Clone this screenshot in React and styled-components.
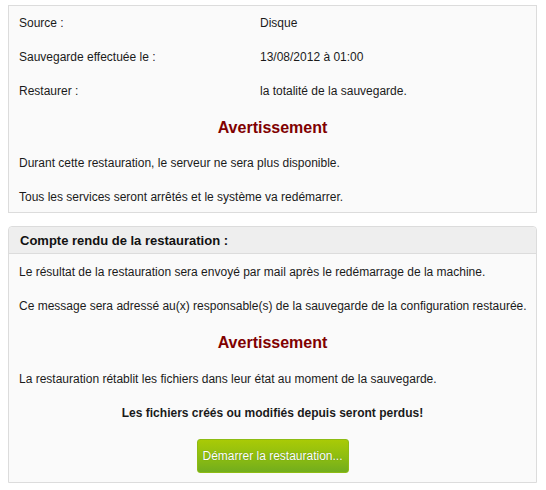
import React from "react";
import styled, { createGlobalStyle } from "styled-components";

const Global = createGlobalStyle`
  html, body { margin: 0; padding: 0; background: #ffffff; }
  body { font-family: "Liberation Sans", Arial, sans-serif; font-size: 12px; color: #1a1a1a; }
`;

const Page = styled.div`
  padding: 5px 9px 0 8px;
  display: flex;
  flex-direction: column;
  gap: 13px;
`;

const Panel = styled.section`
  width: 529px;
  box-sizing: border-box;
  border: 1px solid #dcdcdc;
  background: #fafafa;
  border-radius: ${(p) => (p.$rounded ? "4px 4px 0 0" : "0")};
`;

const PanelHeader = styled.div`
  height: 26px;
  display: flex;
  align-items: center;
  padding-left: 11px;
  background: #eeeeee;
  border-bottom: 1px solid #dcdcdc;
  border-radius: 4px 4px 0 0;
  font-weight: bold;
  font-size: 13px;
  color: #111;
`;

const Body = styled.div`
  padding: ${(p) => p.$pad};
  display: flex;
  flex-direction: column;
`;

const InfoRow = styled.div`
  display: grid;
  grid-template-columns: 241px 1fr;
  line-height: 14px;
  margin-top: ${(p) => p.$mt || 0}px;
`;

const Line = styled.p`
  margin: ${(p) => p.$mt || 0}px 0 0 0;
  line-height: 14px;
  white-space: nowrap;
  text-align: ${(p) => (p.$center ? "center" : "left")};
  font-weight: ${(p) => (p.$bold ? "bold" : "normal")};
`;

const Warning = styled.h3`
  margin: ${(p) => p.$mt || 0}px 0 0 0;
  line-height: 20px;
  font-size: 16px;
  font-weight: bold;
  color: #800000;
  text-align: center;
`;

const ButtonRow = styled.div`
  display: flex;
  justify-content: center;
  margin-top: 19px;
`;

const GreenButton = styled.button`
  width: 152px;
  height: 34px;
  border: 1px solid #8dbb14;
  border-radius: 3px;
  background: linear-gradient(to bottom, #a9ca06 0%, #8fbe10 50%, #72ad1d 100%);
  color: #ffffff;
  font-family: "Liberation Sans", Arial, sans-serif;
  font-size: 12px;
  text-shadow: 0 0 1px rgba(60, 90, 0, 0.6);
  cursor: pointer;
  padding: 0;
`;

export default function App() {
  return (
    <>
      <Global />
      <Page>
        <Panel>
          <Body $pad="10px 10px 8px 10px">
            <InfoRow>
              <span>Source :</span>
              <span>Disque</span>
            </InfoRow>
            <InfoRow $mt={20}>
              <span>Sauvegarde effectuée le :</span>
              <span>13/08/2012 à 01:00</span>
            </InfoRow>
            <InfoRow $mt={20}>
              <span>Restaurer :</span>
              <span>la totalité de la sauvegarde.</span>
            </InfoRow>
            <Warning $mt={20}>Avertissement</Warning>
            <Line $mt={18}>Durant cette restauration, le serveur ne sera plus disponible.</Line>
            <Line $mt={20}>Tous les services seront arrêtés et le système va redémarrer.</Line>
          </Body>
        </Panel>
        <Panel $rounded>
          <PanelHeader>Compte rendu de la restauration :</PanelHeader>
          <Body $pad="11px 10px 9px 10px">
            <Line>Le résultat de la restauration sera envoyé par mail après le redémarrage de la machine.</Line>
            <Line $mt={20}>Ce message sera adressé au(x) responsable(s) de la sauvegarde de la configuration restaurée.</Line>
            <Warning $mt={20}>Avertissement</Warning>
            <Line $mt={19}>La restauration rétablit les fichiers dans leur état au moment de la sauvegarde.</Line>
            <Line $mt={20} $center $bold>Les fichiers créés ou modifiés depuis seront perdus!</Line>
            <ButtonRow>
              <GreenButton>Démarrer la restauration...</GreenButton>
            </ButtonRow>
          </Body>
        </Panel>
      </Page>
    </>
  );
}
